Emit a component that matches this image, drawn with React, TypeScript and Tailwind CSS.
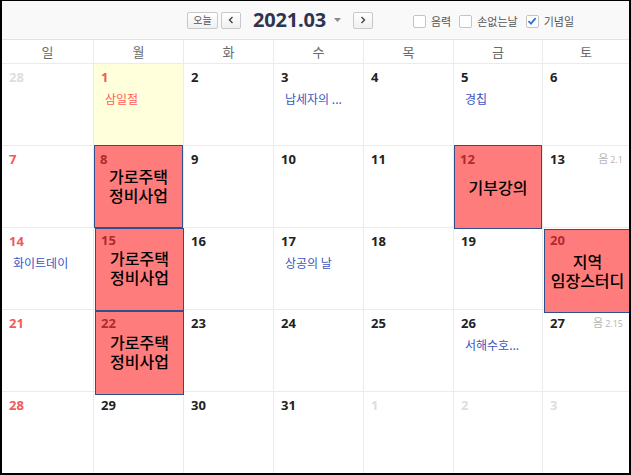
import React from "react";

type Box = { lines: string[]; left: number; top: number; w: number; h: number; pt: number; mt: number };
type Cell = {
  d: number;
  tone: "sun" | "norm" | "other";
  today?: boolean;
  ev?: { text: string; red?: boolean };
  lunar?: string;
  box?: Box;
};

const KR = "font-['Noto_Sans_CJK_KR','Noto_Sans',sans-serif]";
const NUM = "font-['Open_Sans','Noto_Sans',sans-serif]";

const weeks: Cell[][] = [
  [
    { d: 28, tone: "other" },
    { d: 1, tone: "sun", today: true, ev: { text: "삼일절", red: true } },
    { d: 2, tone: "norm" },
    { d: 3, tone: "norm", ev: { text: "납세자의 ..." } },
    { d: 4, tone: "norm" },
    { d: 5, tone: "norm", ev: { text: "경칩" } },
    { d: 6, tone: "norm" },
  ],
  [
    { d: 7, tone: "sun" },
    { d: 8, tone: "norm", box: { lines: ["가로주택", "정비사업"], left: 0, top: -1, w: 89, h: 83, pt: 5, mt: 0 } },
    { d: 9, tone: "norm" },
    { d: 10, tone: "norm" },
    { d: 11, tone: "norm" },
    { d: 12, tone: "norm", box: { lines: ["기부강의"], left: 0, top: -1, w: 88, h: 84, pt: 5, mt: 11 } },
    { d: 13, tone: "norm", lunar: "2.1" },
  ],
  [
    { d: 14, tone: "sun", ev: { text: "화이트데이" } },
    { d: 15, tone: "norm", box: { lines: ["가로주택", "정비사업"], left: 1, top: 0, w: 89, h: 83, pt: 3, mt: 1 } },
    { d: 16, tone: "norm" },
    { d: 17, tone: "norm", ev: { text: "상공의 날" } },
    { d: 18, tone: "norm" },
    { d: 19, tone: "norm" },
    { d: 20, tone: "norm", box: { lines: ["지역", "임장스터디"], left: 1, top: 1, w: 87, h: 84, pt: 2, mt: 4 } },
  ],
  [
    { d: 21, tone: "sun" },
    { d: 22, tone: "norm", box: { lines: ["가로주택", "정비사업"], left: 1, top: 1, w: 89, h: 84, pt: 3, mt: 2 } },
    { d: 23, tone: "norm" },
    { d: 24, tone: "norm" },
    { d: 25, tone: "norm" },
    { d: 26, tone: "norm", ev: { text: "서해수호..." } },
    { d: 27, tone: "norm", lunar: "2.15" },
  ],
  [
    { d: 28, tone: "sun" },
    { d: 29, tone: "norm" },
    { d: 30, tone: "norm" },
    { d: 31, tone: "norm" },
    { d: 1, tone: "other" },
    { d: 2, tone: "other" },
    { d: 3, tone: "other" },
  ],
];

const days = ["일", "월", "화", "수", "목", "금", "토"];

function numColor(tone: Cell["tone"]) {
  if (tone === "sun") return "text-[#f25a5a]";
  if (tone === "other") return "text-[#dedede]";
  return "text-[#222]";
}

function Checkbox({ checked }: { checked?: boolean }) {
  return (
    <span className="w-[13px] h-[13px] border border-[#c4c4c4] bg-white rounded-[2px] flex items-center justify-center">
      {checked && (
        <svg width="10" height="10" viewBox="0 0 10 10">
          <path d="M1.5 5.2 L4 7.6 L8.6 2.2" fill="none" stroke="#2f6fd6" strokeWidth="1.8" />
        </svg>
      )}
    </span>
  );
}

function DayCell({ c, first }: { c: Cell; first: boolean }) {
  return (
    <div
      className={`relative h-full ${first ? "" : "border-l border-[#ebebeb]"} ${
        c.today ? "bg-[#ffffdc]" : ""
      }`}
    >
      <div className="pt-[5px] pl-[7px] pr-[6px] flex items-center justify-between h-[21px]">
        <span className={`${NUM} text-[13px] font-bold leading-[16px] ${numColor(c.tone)}`}>{c.d}</span>
        {c.lunar && (
          <span className="flex items-baseline gap-[2px] text-[#b4b4b4]">
            <span className={`${KR} text-[11px] leading-[16px]`}>음</span>
            <span className={`${NUM} text-[9px] leading-[16px]`}>{c.lunar}</span>
          </span>
        )}
      </div>
      {c.ev && (
        <div
          className={`${KR} mt-[6px] pl-[11px] text-[12px] leading-[16px] whitespace-nowrap ${
            c.ev.red ? "text-[#ff5c5c]" : "text-[#3b55c4]"
          }`}
        >
          {c.ev.text}
        </div>
      )}
      {c.box && (
        <div
          className="absolute z-10 bg-[#ff7c7c] border border-[#2d4f8e]"
          style={{ left: c.box.left, top: c.box.top, width: c.box.w, height: c.box.h }}
        >
          <div className="pl-[5px]" style={{ paddingTop: c.box.pt }}>
            <span className={`${NUM} text-[13px] font-bold leading-[16px] text-[#b3292e] block`}>{c.d}</span>
          </div>
          <div className={`${KR} text-center text-[16px] leading-[19px] text-black font-medium`} style={{ marginTop: c.box.mt }}>
            {c.box.lines.map((l) => (
              <div key={l} className="whitespace-nowrap">{l}</div>
            ))}
          </div>
        </div>
      )}
    </div>
  );
}

export default function App() {
  const cols = "grid grid-cols-[91px_90px_90px_90px_90px_89px_87px]";
  return (
    <div className="w-[631px] h-[475px] bg-white border-black border-t border-l-2 border-r-2 border-b-2 flex flex-col overflow-hidden">
      <div className="h-[39px] shrink-0 bg-[#f9f9f9] border-b border-[#e2e2e2] flex items-center pl-[185px]">
        <button className={`${KR} h-[17px] w-[31px] border border-[#c9c9c9] rounded-[2px] bg-gradient-to-b from-white to-[#f0f0f0] text-[10px] leading-none text-[#555] flex items-center justify-center`}>
          오늘
        </button>
        <button className="ml-[3px] h-[17px] w-[20px] border border-[#c9c9c9] rounded-[2px] bg-gradient-to-b from-white to-[#f0f0f0] flex items-center justify-center">
          <svg width="6" height="8" viewBox="0 0 6 8">
            <path d="M4.5 1 L1.5 4 L4.5 7" fill="none" stroke="#444" strokeWidth="1.4" />
          </svg>
        </button>
        <span className={`${NUM} ml-[12px] text-[20px] font-bold leading-none text-[#2e3451] tracking-[-0.2px]`}>2021.03</span>
        <svg className="ml-[8px]" width="7" height="4" viewBox="0 0 7 4">
          <path d="M0 0 L7 0 L3.5 4 Z" fill="#8a8a8a" />
        </svg>
        <button className="ml-[12px] h-[17px] w-[20px] border border-[#c9c9c9] rounded-[2px] bg-gradient-to-b from-white to-[#f0f0f0] flex items-center justify-center">
          <svg width="6" height="8" viewBox="0 0 6 8">
            <path d="M1.5 1 L4.5 4 L1.5 7" fill="none" stroke="#444" strokeWidth="1.4" />
          </svg>
        </button>
        <div className={`${KR} ml-[40px] mt-[2px] flex items-center text-[11px] text-[#555]`}>
          <Checkbox />
          <span className="ml-[5px]">음력</span>
          <span className="ml-[8px]"><Checkbox /></span>
          <span className="ml-[5px]">손없는날</span>
          <span className="ml-[8px]"><Checkbox checked /></span>
          <span className="ml-[5px]">기념일</span>
        </div>
      </div>
      <div className={`${cols} h-[24px] shrink-0 border-b border-[#ebebeb] bg-white`}>
        {days.map((d, i) => (
          <div
            key={d}
            className={`${KR} flex items-center justify-center text-[13px] text-[#6a6a6a] ${i ? "border-l border-[#ebebeb]" : ""}`}
          >
            {d}
          </div>
        ))}
      </div>
      {weeks.map((w, wi) => (
        <div
          key={wi}
          className={`${cols} ${wi < 4 ? "h-[82px] border-b border-[#ebebeb]" : "h-[81px]"} shrink-0`}
        >
          {w.map((c, ci) => (
            <DayCell key={ci} c={c} first={ci === 0} />
          ))}
        </div>
      ))}
    </div>
  );
}
